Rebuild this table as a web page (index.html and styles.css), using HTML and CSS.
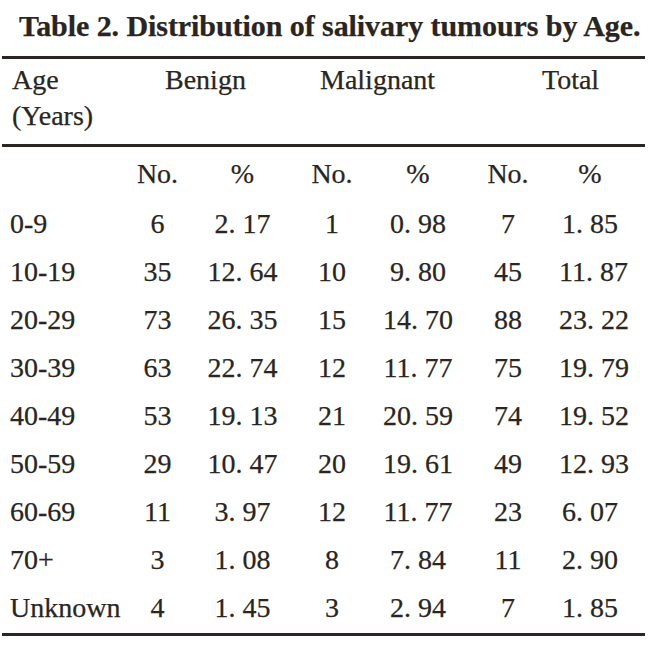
FILE: index.html
```html
<!DOCTYPE html>
<html lang="en">
<head>
<meta charset="utf-8">
<title>Table 2</title>
<link rel="stylesheet" href="styles.css">
</head>
<body>
<div class="page">
  <div class="title">Table 2. Distribution of salivary tumours by Age.</div>
  <div class="rule rule-top"></div>
  <div class="head grid">
    <div class="age-head">Age<br>(Years)</div>
    <div class="group g-benign">Benign</div>
    <div class="group g-malig">Malignant</div>
    <div class="group g-total">Total</div>
  </div>
  <div class="rule rule-mid"></div>
  <div class="body">
    <div class="grid row sub">
      <div></div><div class="c">No.</div><div class="c">%</div><div class="c">No.</div><div class="c">%</div><div class="c">No.</div><div class="c">%</div>
    </div>
    <div class="grid row"><div>0-9</div><div class="c">6</div><div class="c">2. 17</div><div class="c">1</div><div class="c">0. 98</div><div class="c">7</div><div class="c">1. 85</div></div>
    <div class="grid row"><div>10-19</div><div class="c">35</div><div class="c">12. 64</div><div class="c">10</div><div class="c">9. 80</div><div class="c">45</div><div class="c">11. 87</div></div>
    <div class="grid row"><div>20-29</div><div class="c">73</div><div class="c">26. 35</div><div class="c">15</div><div class="c">14. 70</div><div class="c">88</div><div class="c">23. 22</div></div>
    <div class="grid row"><div>30-39</div><div class="c">63</div><div class="c">22. 74</div><div class="c">12</div><div class="c">11. 77</div><div class="c">75</div><div class="c">19. 79</div></div>
    <div class="grid row"><div>40-49</div><div class="c">53</div><div class="c">19. 13</div><div class="c">21</div><div class="c">20. 59</div><div class="c">74</div><div class="c">19. 52</div></div>
    <div class="grid row"><div>50-59</div><div class="c">29</div><div class="c">10. 47</div><div class="c">20</div><div class="c">19. 61</div><div class="c">49</div><div class="c">12. 93</div></div>
    <div class="grid row"><div>60-69</div><div class="c">11</div><div class="c">3. 97</div><div class="c">12</div><div class="c">11. 77</div><div class="c">23</div><div class="c">6. 07</div></div>
    <div class="grid row"><div>70+</div><div class="c">3</div><div class="c">1. 08</div><div class="c">8</div><div class="c">7. 84</div><div class="c">11</div><div class="c">2. 90</div></div>
    <div class="grid row"><div>Unknown</div><div class="c">4</div><div class="c">1. 45</div><div class="c">3</div><div class="c">2. 94</div><div class="c">7</div><div class="c">1. 85</div></div>
  </div>
  <div class="rule rule-bottom"></div>
</div>
</body>
</html>
```

FILE: styles.css
```css
html, body {
  margin: 0;
  padding: 0;
  background: #ffffff;
}

.page {
  width: 650px;
  height: 647px;
  font-family: "Liberation Serif", "Times New Roman", serif;
  color: #2a2521;
  overflow: hidden;
  -webkit-text-stroke: 0.25px #2a2521;
}

.title {
  font-weight: 700;
  font-size: 30px;
  line-height: 34px;
  padding: 9px 0 0 19px;
  letter-spacing: -0.07px;
  white-space: nowrap;
}

.rule {
  height: 3px;
  width: 643px;
  margin-left: 2px;
  background: #2b2623;
}

.rule-top {
  margin-top: 13px;
}

.rule-mid {
  margin-top: 10px;
}

.rule-bottom {
  margin-top: 1px;
}

.grid {
  display: grid;
  grid-template-columns: 105px 85px 85px 94px 78px 102px 62px;
  padding-left: 10px;
  font-size: 28px;
}

.head {
  line-height: 36px;
  padding-top: 3px;
}

.age-head {
  grid-row: 1;
  grid-column: 1;
  white-space: nowrap;
  padding-left: 2px;
}

.group {
  grid-row: 1;
  white-space: nowrap;
}

.g-benign {
  grid-column: 2 / 4;
  padding-left: 50px;
}

.g-malig {
  grid-column: 4 / 6;
  padding-left: 35px;
}

.g-total {
  grid-column: 6 / 8;
  padding-left: 85px;
}

.body {
  padding-top: 3px;
}

.row {
  height: 48px;
  line-height: 48px;
  white-space: nowrap;
}

.row.sub {
  height: 50px;
  line-height: 48px;
}

.c {
  text-align: center;
}
```
